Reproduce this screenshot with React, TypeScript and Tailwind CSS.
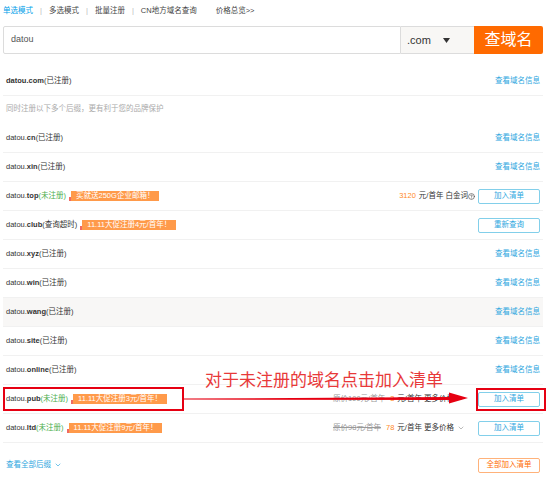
import { ChevronDown, CircleHelp } from "lucide-react";

type Row = {
  suffix: string;
  status: "reg" | "free" | "timeout";
  badge?: string;
  shaded?: boolean;
};

const rows: Row[] = [
  { suffix: "cn", status: "reg" },
  { suffix: "xin", status: "reg" },
  { suffix: "top", status: "free", badge: "买就送250G企业邮箱！" },
  { suffix: "club", status: "timeout", badge: "11.11大促注册4元/首年！" },
  { suffix: "xyz", status: "reg" },
  { suffix: "win", status: "reg" },
  { suffix: "wang", status: "reg", shaded: true },
  { suffix: "site", status: "reg" },
  { suffix: "online", status: "reg" },
  { suffix: "pub", status: "free", badge: "11.11大促注册3元/首年！" },
  { suffix: "ltd", status: "free", badge: "11.11大促注册9元/首年！" },
];

function Badge({ text }: { text: string }) {
  return (
    <span className="ml-[3px] flex items-end">
      <span className="h-[4px] w-[2px] bg-[#f06a63]" />
      <span className="flex h-[10px] items-center bg-[#ff9a4a] px-[5px] text-[7.5px] leading-none text-white">
        {text}
      </span>
    </span>
  );
}

function BlueButton({ label }: { label: string }) {
  return (
    <button className="flex h-[15px] w-[62px] items-center justify-center rounded-[2px] border border-[#82cfea] text-[7.5px] text-[#2ea7e0]">
      {label}
    </button>
  );
}

function Right({ row }: { row: Row }) {
  if (row.status === "reg") {
    return <span className="text-[#2ea7e0]">查看域名信息</span>;
  }
  if (row.status === "timeout") {
    return <BlueButton label="重新查询" />;
  }
  if (row.suffix === "top") {
    return (
      <div className="flex items-center gap-[3px]">
        <span className="flex items-center">
          <span className="text-[#ff8a1f]">3120</span>
          <span className="ml-[3px]">元/首年 白金词</span>
          <CircleHelp size={7} strokeWidth={2.4} className="text-[#555]" />
        </span>
        <BlueButton label="加入清单" />
      </div>
    );
  }
  const old = row.suffix === "pub" ? "100" : "98";
  const now = row.suffix === "pub" ? "3" : "78";
  return (
    <div className="flex items-center gap-[13px]">
      <span className="flex items-center">
        <span className="text-[#999] line-through">原价{old}元/首年</span>
        <span className="ml-[5px] text-[#ff8a1f]">{now}</span>
        <span className="ml-[3px]">元/首年 更多价格</span>
        <ChevronDown size={8} className="ml-[3px] text-[#999]" />
      </span>
      <BlueButton label="加入清单" />
    </div>
  );
}

function DomainRow({ row }: { row: Row }) {
  return (
    <div
      className={`flex h-[29px] items-center justify-between border-b border-[#f1f1f1] px-[3px] ${
        row.shaded ? "bg-[#f8f7f6]" : ""
      }`}
    >
      <div className="flex items-center">
        <span>datou.</span>
        <span className="font-bold">{row.suffix}</span>
        {row.status === "reg" && <span>(已注册)</span>}
        {row.status === "free" && <span className="text-[#4cae4c]">(未注册)</span>}
        {row.status === "timeout" && <span>(查询超时)</span>}
        {row.badge && <Badge text={row.badge} />}
      </div>
      <Right row={row} />
    </div>
  );
}

export default function App() {
  return (
    <div
      className="relative h-[482px] w-[553px] overflow-hidden bg-white text-[7.5px] text-[#333]"
      style={{ fontFamily: '"Liberation Sans", "Noto Sans CJK SC", sans-serif' }}
    >
      <div className="ml-[3px] w-[540px]">
        {/* tabs */}
        <div className="flex h-[22px] items-center text-[#444]">
          <span className="text-[#00a0e9]">单选模式</span>
          <span className="mx-[7px] text-[#bbb]">|</span>
          <span>多选模式</span>
          <span className="mx-[7px] text-[#bbb]">|</span>
          <span>批量注册</span>
          <span className="mx-[7px] text-[#bbb]">|</span>
          <span>CN地方域名查询</span>
          <span className="ml-[19px]">价格总览&gt;&gt;</span>
        </div>

        {/* search */}
        <div className="mt-[4px] flex h-[28px]">
          <div className="flex flex-1 items-center rounded-l-[2px] border border-[#dcdcdc] pl-[7px] text-[9px] text-[#555]">
            datou
          </div>
          <div className="flex w-[73px] items-center border-y border-[#dcdcdc] bg-[#f8f7f5] pl-[6px] text-[11px] text-[#333]">
            .com
            <svg width="7" height="5" viewBox="0 0 7 5" className="ml-[12px]">
              <path d="M0 0h7L3.5 5z" fill="#333" />
            </svg>
          </div>
          <button className="flex w-[69px] items-center justify-center rounded-r-[2px] bg-[#ff6a00] text-[16px] text-white">
            查域名
          </button>
        </div>

        {/* main result */}
        <div className="mt-[13px] flex h-[29px] items-center justify-between border-b border-[#f1f1f1] px-[3px]">
          <div>
            <span className="font-bold">datou.com</span>
            <span>(已注册)</span>
          </div>
          <span className="text-[#2ea7e0]">查看域名信息</span>
        </div>
        <div className="flex h-[28px] items-center px-[3px] pb-[2px] text-[#aaa]">
          同时注册以下多个后缀，更有利于您的品牌保护
        </div>

        {rows.map((r) => (
          <DomainRow key={r.suffix} row={r} />
        ))}

        <div className="flex h-[44px] items-center justify-between px-[3px]">
          <span className="flex items-center text-[#2ea7e0]">
            查看全部后缀
            <ChevronDown size={8} className="ml-[3px]" />
          </span>
          <button className="flex h-[15px] w-[62px] items-center justify-center rounded-[2px] border border-[#ffb27a] text-[7.5px] text-[#ff6a00]">
            全部加入清单
          </button>
        </div>
      </div>

      {/* annotation */}
      <div className="absolute left-[3px] top-[387px] h-[24px] w-[181px] border-2 border-[#e60012]" />
      <div className="absolute left-[476px] top-[388px] h-[23px] w-[70px] border-2 border-[#e60012]" />
      <div className="absolute left-[205px] top-[372px] text-[17px] leading-none text-[#e8393a]">
        对于未注册的域名点击加入清单
      </div>
      <svg className="absolute left-0 top-0" width="553" height="482" viewBox="0 0 553 482">
        <polygon
          points="183,398.6 449,397 449,392.5 468,398 449,403.5 449,400 183,399.6"
          fill="#e60012"
        />
      </svg>
    </div>
  );
}
